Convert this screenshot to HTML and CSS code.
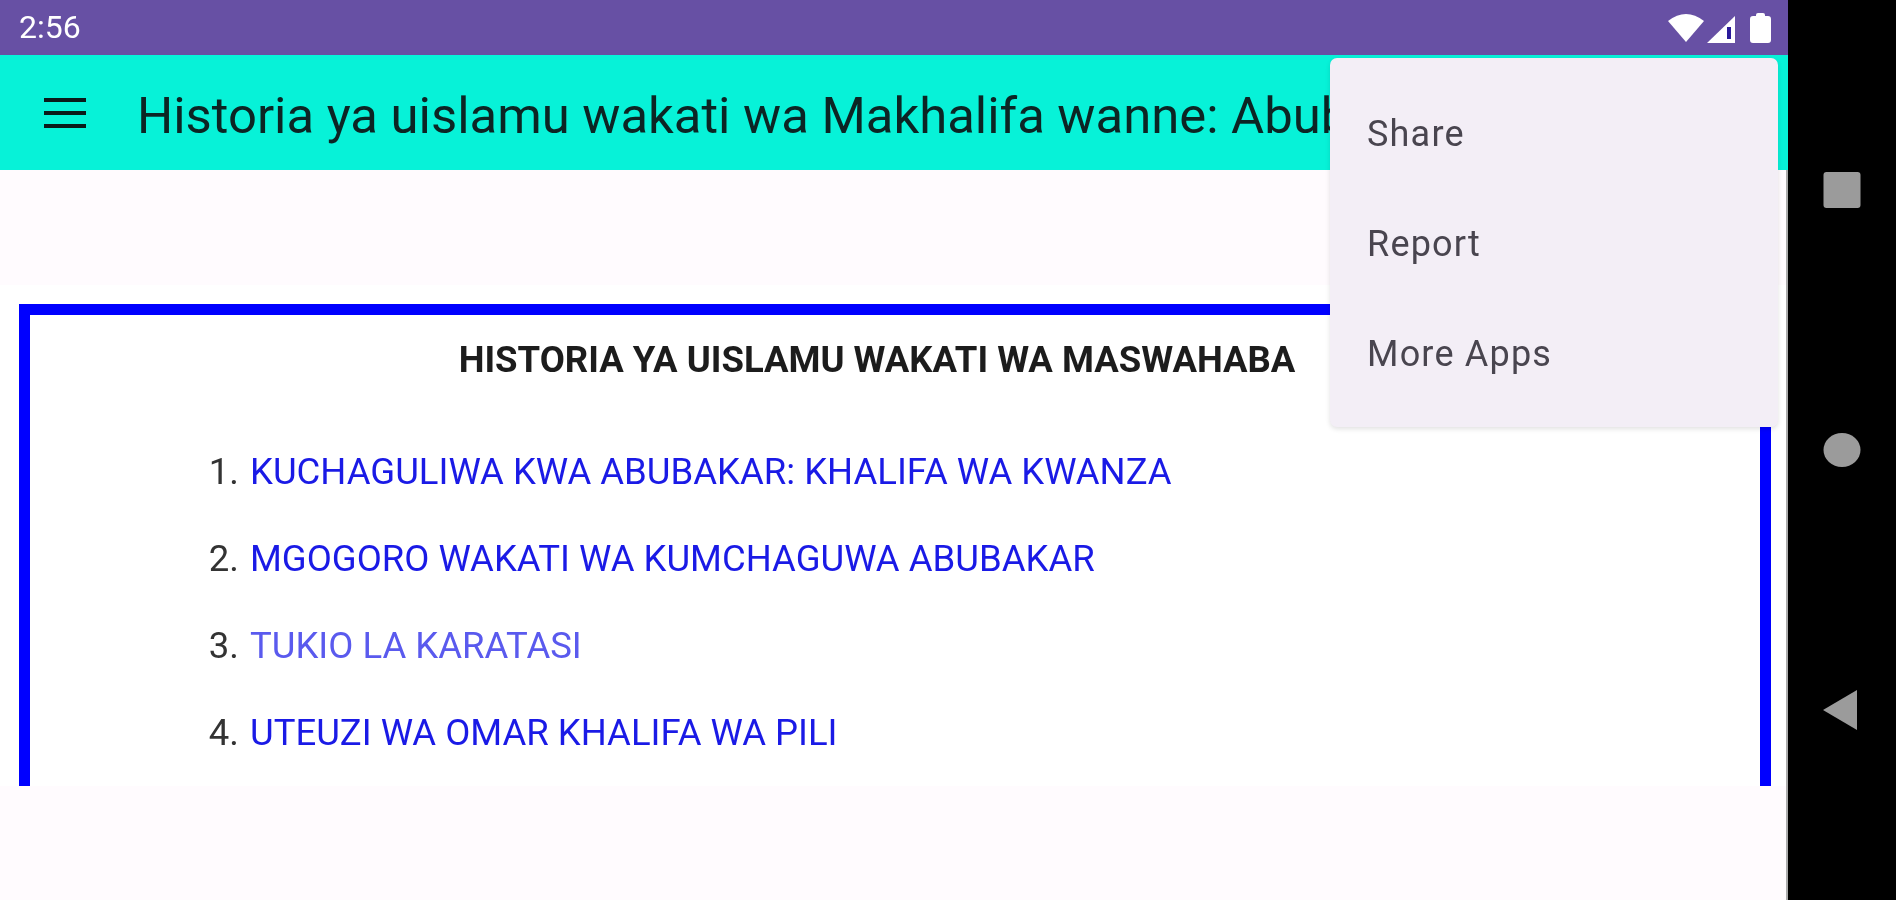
FILE: index.html
```html
<!DOCTYPE html>
<html lang="sw">
<head>
    <meta charset="UTF-8">
    <title>Historia ya uislamu</title>
    <link rel="stylesheet" href="styles.css">
</head>
<body>
    <div class="screen">
        <div class="status-bar">
            <span class="clock">2:56</span>
            <div class="status-icons">
                <svg class="icon-wifi" width="36" height="29" viewBox="0 0 36 29">
                    <path d="M0 8 Q18 -6 36 8 L18 29 Z" fill="#fff"/>
                </svg>
                <svg class="icon-signal" width="28" height="27" viewBox="0 0 28 27">
                    <path d="M28 0 V27 H0 Z" fill="#fff"/>
                    <rect x="20" y="11" width="4" height="12" fill="#2a1a9a"/>
                </svg>
                <svg class="icon-battery" width="21" height="31" viewBox="0 0 21 31">
                    <path d="M6 3 Q6 1 8 1 H13 Q15 1 15 3 V4 H18 Q21 4 21 7 V28 Q21 31 18 31 H3 Q0 31 0 28 V7 Q0 4 3 4 H6 Z" fill="#fff"/>
                </svg>
            </div>
        </div>

        <header class="toolbar">
            <svg class="menu-icon" width="42" height="30" viewBox="0 0 42 30">
                <rect y="0" width="42" height="4" fill="#0a1a1a"/>
                <rect y="13" width="42" height="4" fill="#0a1a1a"/>
                <rect y="26" width="42" height="4" fill="#0a1a1a"/>
            </svg>
            <h1 class="title">Historia ya uislamu wakati wa Makhalifa wanne: Abubakar</h1>
        </header>

        <div class="ad-space"></div>

        <main class="webview">
            <article class="box">
                <h2>HISTORIA YA UISLAMU WAKATI WA MASWAHABA</h2>
                <ol class="chapters">
                    <li><a href="#">KUCHAGULIWA KWA ABUBAKAR: KHALIFA WA KWANZA</a></li>
                    <li><a href="#">MGOGORO WAKATI WA KUMCHAGUWA ABUBAKAR</a></li>
                    <li><a href="#" class="faded">TUKIO LA KARATASI</a></li>
                    <li><a href="#">UTEUZI WA OMAR KHALIFA WA PILI</a></li>
                </ol>
            </article>
        </main>

        <div class="bottom-space"></div>

        <!-- menu ouvert par dessus la toolbar -->
        <ul class="popup-menu">
            <li>Share</li>
            <li>Report</li>
            <li>More Apps</li>
        </ul>
    </div>

    <nav class="nav-bar">
        <svg width="38" height="36" viewBox="0 0 38 36"><rect x="0.5" width="37" height="36" rx="3" fill="#9b9b9b"/></svg>
        <svg width="38" height="36" viewBox="0 0 38 36"><ellipse cx="19" cy="18" rx="18.5" ry="17" fill="#9b9b9b"/></svg>
        <svg class="nav-back" width="38" height="42" viewBox="0 0 38 42"><path d="M1 21 L35 1 V41 Z" fill="#9b9b9b"/></svg>
    </nav>
</body>
</html>
```

FILE: styles.css
```css
* {
    box-sizing: border-box;
}

html, body {
    height: 100%;
}

body {
    margin: 0;
    display: flex;
    overflow: hidden;
    background-color: #000;
    font-family: Roboto, "Liberation Sans", sans-serif;
    filter: blur(0.6px); /* la capture d'origine est floue */
}

.screen {
    position: relative;
    width: 1788px;
    height: 900px;
    display: flex;
    flex-direction: column;
    background-color: #fffbfe;
    overflow: hidden;
}

/* Barre de statut */
.status-bar {
    height: 55px;
    flex: none;
    display: flex;
    align-items: center;
    justify-content: space-between;
    padding: 0 17px 0 19px;
    background-color: #6750a4;
    color: #fff;
}

.clock {
    font-size: 32px;
    line-height: 55px;
}

.status-icons {
    display: flex;
    align-items: center;
}

.icon-signal {
    margin-left: 3px;
    margin-top: 3px;
}

.icon-battery {
    margin-left: 15px;
}

/* Toolbar */
.toolbar {
    height: 115px;
    flex: none;
    display: flex;
    align-items: center;
    padding-left: 44px;
    background-color: #07f2d8;
}

.menu-icon {
    flex: none;
}

.title {
    margin: 6px 0 0 51px;
    font-size: 50.8px;
    font-weight: 400;
    color: #0c2524;
    white-space: nowrap;
}

.ad-space {
    height: 115px;
    flex: none;
    border-right: 2px solid #aaa;
}

/* Contenu web */
.webview {
    height: 501px;
    flex: none;
    padding: 19px 15px 0 19px;
    background-color: #fff;
    border-right: 2px solid #aaa;
    overflow: hidden;
}

.box {
    height: 700px;
    border: 11px solid #0000ff;
    background-color: #fff;
}

.box h2 {
    margin: 0;
    padding: 25px 36px 0 0;
    font-size: 36.5px;
    line-height: 40px;
    font-weight: 700;
    text-align: center;
    color: #1c1c1c;
}

.chapters {
    margin: 0;
    padding: 72px 0 0 218px;
    font-size: 36.5px;
    color: #333;
}

.chapters li {
    height: 87px;
    line-height: 40px;
}

.chapters a {
    margin-left: 2px;
    color: #1a1ae6;
    text-decoration: none;
}

.chapters a.faded {
    color: #5a5aee;
}

.bottom-space {
    flex: 1;
    border-right: 2px solid #aaa;
}

/* Menu */
.popup-menu {
    position: absolute;
    top: 58px;
    left: 1330px;
    width: 448px;
    height: 369px;
    margin: 0;
    padding: 21px 0;
    list-style: none;
    background-color: #f3eef6;
    border-radius: 7px;
    box-shadow: 0 2px 5px rgba(0, 0, 0, 0.12);
}

.popup-menu li {
    height: 110px;
    padding-left: 37px;
    font-size: 36px;
    line-height: 110px;
    letter-spacing: 1.2px;
    color: #49454f;
}

/* Barre de navigation */
.nav-bar {
    width: 108px;
    height: 900px;
    display: flex;
    flex-direction: column;
    align-items: center;
    padding-top: 172px;
    gap: 224px;
}

.nav-back {
    margin-top: -3px;
    margin-left: -2px;
}
```
